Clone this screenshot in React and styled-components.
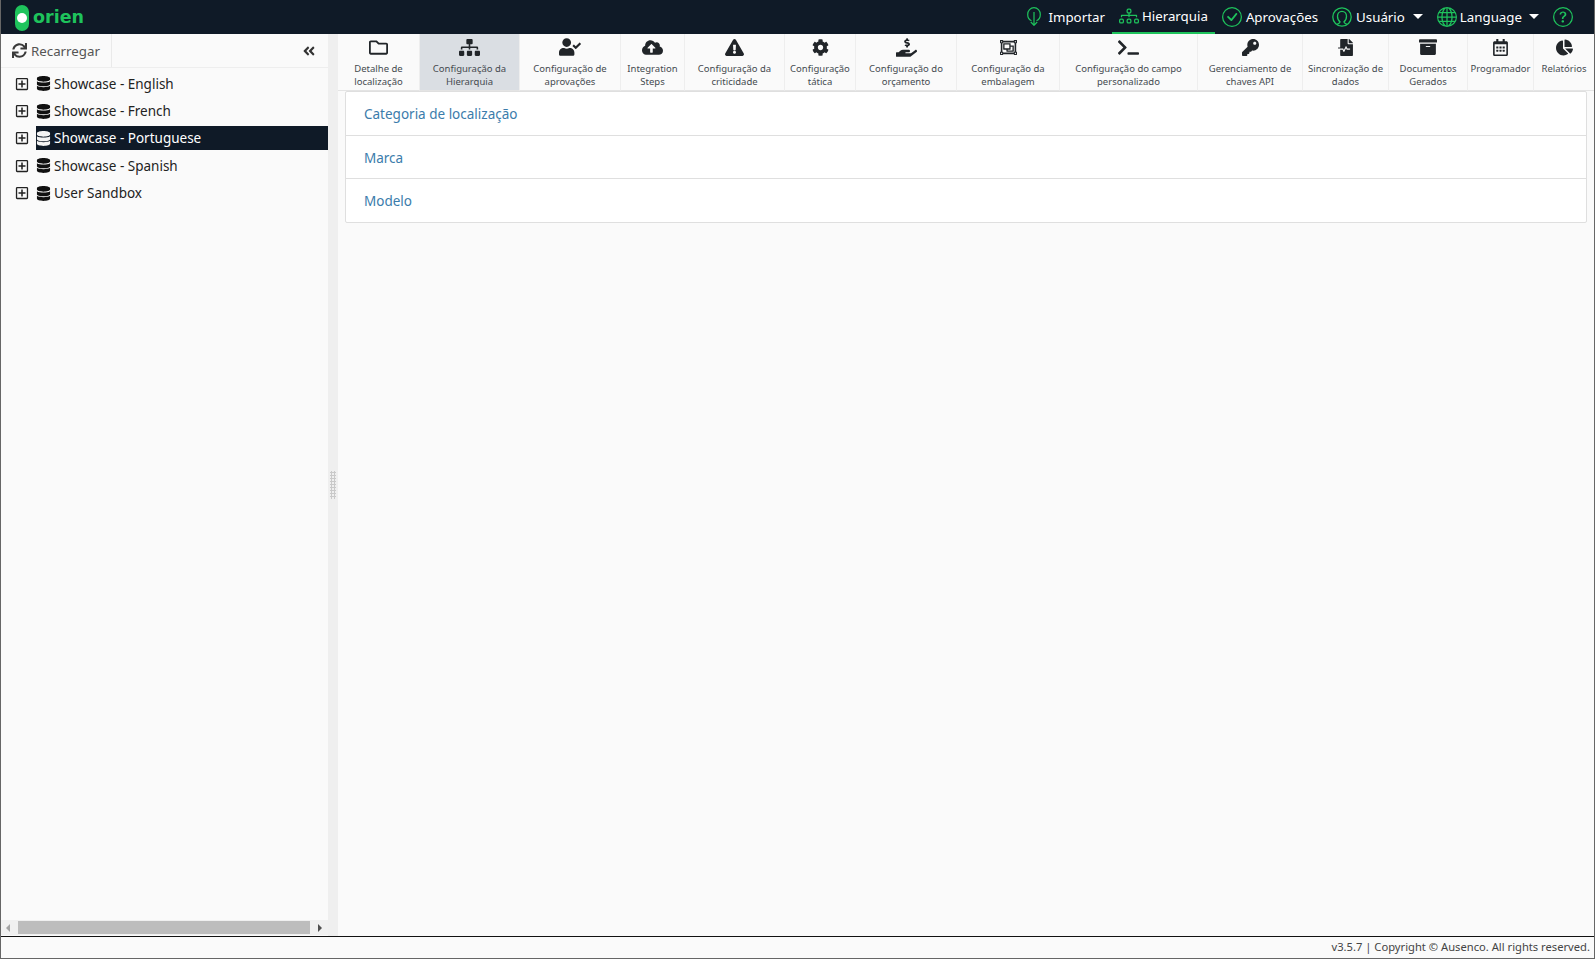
import React from 'react';
import styled, { createGlobalStyle } from 'styled-components';
import {
  FaRegFolder, FaSitemap, FaUserCheck, FaCloudUploadAlt, FaExclamationTriangle, FaCog,
  FaHandHoldingUsd, FaRegObjectGroup, FaTerminal, FaKey, FaFileMedicalAlt, FaArchive,
  FaRegCalendarAlt, FaChartPie, FaSync, FaAngleDoubleLeft, FaDatabase, FaRegPlusSquare,
} from 'react-icons/fa';
import { BsCheckCircle, BsDiagram3, BsGlobe, BsQuestionCircle } from 'react-icons/bs';

const GlobalStyle = createGlobalStyle`
  html, body { margin: 0; padding: 0; height: 100%; }
  body { font-family: "Noto Sans", "Open Sans", sans-serif; color: #212529; background: #fafafa; }
  * { box-sizing: border-box; }
`;

const ImportIcon = () => (
  <svg width="14" height="19" viewBox="0 0 14 19" fill="none" stroke="currentColor" strokeWidth="1.2">
    <path d="M4.500 13.800C2.200 12.700.7 10.300.7 7.400.7 3.700 3.500.7 7 .7s6.300 3 6.300 6.700c0 2.900-1.500 5.300-3.800 6.400" />
    <path d="M7 5v13.200M3.800 15 7 18.300 10.200 15" />
  </svg>
);

const UserIcon = () => (
  <svg width="20" height="20" viewBox="0 0 20 20" fill="none" stroke="currentColor" strokeWidth="1.3">
    <circle cx="10" cy="10" r="9.200" />
    <path d="M5 17.500c1.300-.8 2.500-1.300 3-2.600C6.300 13.700 5.500 11.700 5.500 9.300 5.500 6.300 7.500 4.300 10 4.300s4.500 2 4.500 5c0 2.400-.8 4.400-2.500 5.600.5 1.300 1.700 1.800 3 2.600" />
  </svg>
);

const Logo = () => (
  <svg width="14" height="26" viewBox="0 0 14 26">
    <rect x="0" y="0" width="14" height="26" rx="7" fill="#1ec35c" />
    <circle cx="7" cy="13" r="5" fill="#fff" />
  </svg>
);

const Shell = styled.div`
  width: 1595px;
  height: 959px;
  display: flex;
  flex-direction: column;
  overflow: hidden;
  border-left: 1px solid #666;
  border-right: 1px solid #666;
  border-bottom: 1px solid #666;
`;

const Header = styled.header`
  height: 34px;
  flex: none;
  display: flex;
  align-items: stretch;
  justify-content: space-between;
  background: #0f1a27;
  padding: 0 14px 0 14px;
`;

const Brand = styled.div`
  display: flex;
  align-items: center;
  gap: 4px;
  padding-top: 1px;
`;

const BrandName = styled.span`
  color: #1ec35c;
  font-family: "DejaVu Sans", sans-serif;
  font-size: 17.500px;
  font-weight: 700;
  line-height: 26px;
  margin-top: -2px;
`;

const Nav = styled.nav`
  display: flex;
  align-items: stretch;
`;

const NavItem = styled.div`
  display: flex;
  align-items: center;
  gap: ${({ $gap }) => $gap || 4}px;
  padding: ${({ $active }) => ($active ? '0 7px 1px' : '1px 7px 0')};
  color: #fff;
  font-size: 13.300px;
  white-space: nowrap;
  border-bottom: 2px solid ${({ $active }) => ($active ? '#1ec35c' : 'transparent')};
  & > svg { color: #1ec35c; flex: none; }
`;

const Caret = styled.span`
  width: 0;
  height: 0;
  margin-left: 4px;
  border-left: 5px solid transparent;
  border-right: 5px solid transparent;
  border-top: 5px solid #fff;
`;

const Body = styled.div`
  flex: 1;
  min-height: 0;
  display: flex;
`;

const Sidebar = styled.aside`
  width: 327px;
  flex: none;
  display: flex;
  flex-direction: column;
  background: #fafafa;
`;

const SideTools = styled.div`
  height: 34px;
  flex: none;
  display: flex;
  align-items: center;
  justify-content: space-between;
  padding-right: 12px;
  border-bottom: 1px solid #eee;
`;

const ReloadButton = styled.div`
  height: 100%;
  width: 111px;
  display: flex;
  align-items: center;
  gap: 4px;
  padding-left: 11px;
  font-size: 13.300px;
  color: #555;
  border-right: 1px solid #eaeaea;
  & > svg { color: #3a3a3a; font-size: 15px; }
`;

const CollapseIcon = styled(FaAngleDoubleLeft)`
  color: #333;
  font-size: 14px;
`;

const Tree = styled.div`
  flex: 1;
  padding-top: 2px;
`;

const TreeRow = styled.div`
  height: 27.400px;
  display: flex;
  align-items: center;
  padding-left: 14px;
  font-size: 13.500px;
  & > svg { font-size: 14px; color: #222; flex: none; }
`;

const TreeLabel = styled.div`
  flex: 1;
  height: 24px;
  margin-left: 7px;
  display: flex;
  align-items: center;
  gap: 3px;
  white-space: nowrap;
  color: ${({ $selected }) => ($selected ? '#fff' : '#222')};
  background: ${({ $selected }) => ($selected ? '#0f1a27' : 'transparent')};
  & > svg { font-size: 15px; flex: none; color: ${({ $selected }) => ($selected ? '#f4f4f4' : '#111')}; }
`;

const ScrollTrack = styled.div`
  height: 15px;
  flex: none;
  display: flex;
  align-items: center;
  background: #f0f0f0;
  padding: 0 6px 0 5px;
  gap: 8px;
  margin-bottom: 1px;
`;

const ScrollThumb = styled.div`
  flex: 1;
  height: 13px;
  background: #bdbdbd;
`;

const ScrollArrow = styled.span`
  width: 0;
  height: 0;
  border-top: 4px solid transparent;
  border-bottom: 4px solid transparent;
  ${({ $dir, $dim }) => ($dir === 'left'
    ? `border-right: 4px solid ${$dim ? '#a3a3a3' : '#505050'};`
    : `border-left: 4px solid ${$dim ? '#a3a3a3' : '#505050'};`)}
`;

const Splitter = styled.div`
  width: 10px;
  flex: none;
  background: #efefef;
  display: flex;
  align-items: center;
  justify-content: center;
`;

const Grip = styled.div`
  width: 6px;
  height: 28px;
  background-image: radial-gradient(#c9c9c9 1px, transparent 1.200px);
  background-size: 3px 3px;
`;

const Main = styled.main`
  flex: 1;
  min-width: 0;
  display: flex;
  flex-direction: column;
  background: #fafafa;
`;

const TabBar = styled.div`
  height: 57px;
  flex: none;
  display: flex;
`;

const Tab = styled.div`
  width: ${({ $w }) => $w}px;
  flex: none;
  display: flex;
  flex-direction: column;
  align-items: center;
  padding-top: 3px;
  background: ${({ $active }) => ($active ? '#dadee3' : 'transparent')};
  border-right: 1px solid #eee;
  border-bottom: 1px solid #e4e4e4;
`;

const TabIcon = styled.div`
  height: 20px;
  display: flex;
  align-items: center;
  justify-content: center;
  font-size: ${({ $size }) => $size}px;
  color: #212529;
`;

const TabLabel = styled.div`
  margin-top: 5px;
  font-size: 9.500px;
  line-height: 13px;
  text-align: center;
  color: #454a50;
  white-space: pre-line;
`;

const Card = styled.div`
  margin: 0 7px 0 7px;
  background: #fff;
  border: 1px solid #dfdfdf;
  border-radius: 2px;
`;

const CardRow = styled.div`
  height: 43.200px;
  display: flex;
  align-items: center;
  padding-left: 18px;
  font-size: 13.500px;
  color: #3b7cab;
  & + & { border-top: 1px solid #dfdfdf; padding-top: 2px; }
`;

const Footer = styled.footer`
  height: 22px;
  flex: none;
  display: flex;
  align-items: center;
  justify-content: flex-end;
  padding: 0 4px 2px 0;
  background: #fafafa;
  border-top: 1px solid #111;
  font-size: 11.200px;
  color: #444;
`;

const tabs = [
  { w: 82, size: 19, icon: <FaRegFolder />, label: 'Detalhe de\nlocalização' },
  { w: 100, size: 21, icon: <FaSitemap />, label: 'Configuração da\nHierarquia', active: true },
  { w: 101, size: 22, icon: <FaUserCheck />, label: 'Configuração de\naprovações' },
  { w: 64, size: 21, icon: <FaCloudUploadAlt />, label: 'Integration\nSteps' },
  { w: 100, size: 19, icon: <FaExclamationTriangle />, label: 'Configuração da\ncriticidade' },
  { w: 71, size: 17, icon: <FaCog />, label: 'Configuração\ntática' },
  { w: 101, size: 21, icon: <FaHandHoldingUsd />, label: 'Configuração do\norçamento' },
  { w: 103, size: 17, icon: <FaRegObjectGroup />, label: 'Configuração da\nembalagem' },
  { w: 138, size: 21, icon: <FaTerminal />, label: 'Configuração do campo\npersonalizado' },
  { w: 105, size: 17, icon: <FaKey />, label: 'Gerenciamento de\nchaves API' },
  { w: 86, size: 17, icon: <FaFileMedicalAlt />, label: 'Sincronização de\ndados' },
  { w: 79, size: 18, icon: <FaArchive />, label: 'Documentos\nGerados' },
  { w: 66, size: 17, icon: <FaRegCalendarAlt />, label: 'Programador' },
  { w: 61, size: 17, icon: <FaChartPie />, label: 'Relatórios' },
];

const trees = ['Showcase - English', 'Showcase - French', 'Showcase - Portuguese', 'Showcase - Spanish', 'User Sandbox'];

const App = () => (
  <>
    <GlobalStyle />
    <Shell>
      <Header>
        <Brand>
          <Logo />
          <BrandName>orien</BrandName>
        </Brand>
        <Nav>
          <NavItem $gap={7}><ImportIcon />Importar</NavItem>
          <NavItem $active $gap={3}><BsDiagram3 size={20} />Hierarquia</NavItem>
          <NavItem><BsCheckCircle size={20} />Aprovações</NavItem>
          <NavItem><UserIcon />Usuário<Caret /></NavItem>
          <NavItem $gap={3}><BsGlobe size={20} />Language<Caret /></NavItem>
          <NavItem><BsQuestionCircle size={20} /></NavItem>
        </Nav>
      </Header>
      <Body>
        <Sidebar>
          <SideTools>
            <ReloadButton><FaSync />Recarregar</ReloadButton>
            <CollapseIcon />
          </SideTools>
          <Tree>
            {trees.map((t) => (
              <TreeRow key={t}>
                <FaRegPlusSquare />
                <TreeLabel $selected={t === 'Showcase - Portuguese'}><FaDatabase />{t}</TreeLabel>
              </TreeRow>
            ))}
          </Tree>
          <ScrollTrack>
            <ScrollArrow $dir="left" $dim />
            <ScrollThumb />
            <ScrollArrow $dir="right" />
          </ScrollTrack>
        </Sidebar>
        <Splitter><Grip /></Splitter>
        <Main>
          <TabBar>
            {tabs.map((t) => (
              <Tab key={t.label} $w={t.w} $active={t.active}>
                <TabIcon $size={t.size}>{t.icon}</TabIcon>
                <TabLabel>{t.label}</TabLabel>
              </Tab>
            ))}
          </TabBar>
          <Card>
            <CardRow>Categoria de localização</CardRow>
            <CardRow>Marca</CardRow>
            <CardRow>Modelo</CardRow>
          </Card>
        </Main>
      </Body>
      <Footer>v3.5.7 | Copyright © Ausenco. All rights reserved.</Footer>
    </Shell>
  </>
);

export default App;
